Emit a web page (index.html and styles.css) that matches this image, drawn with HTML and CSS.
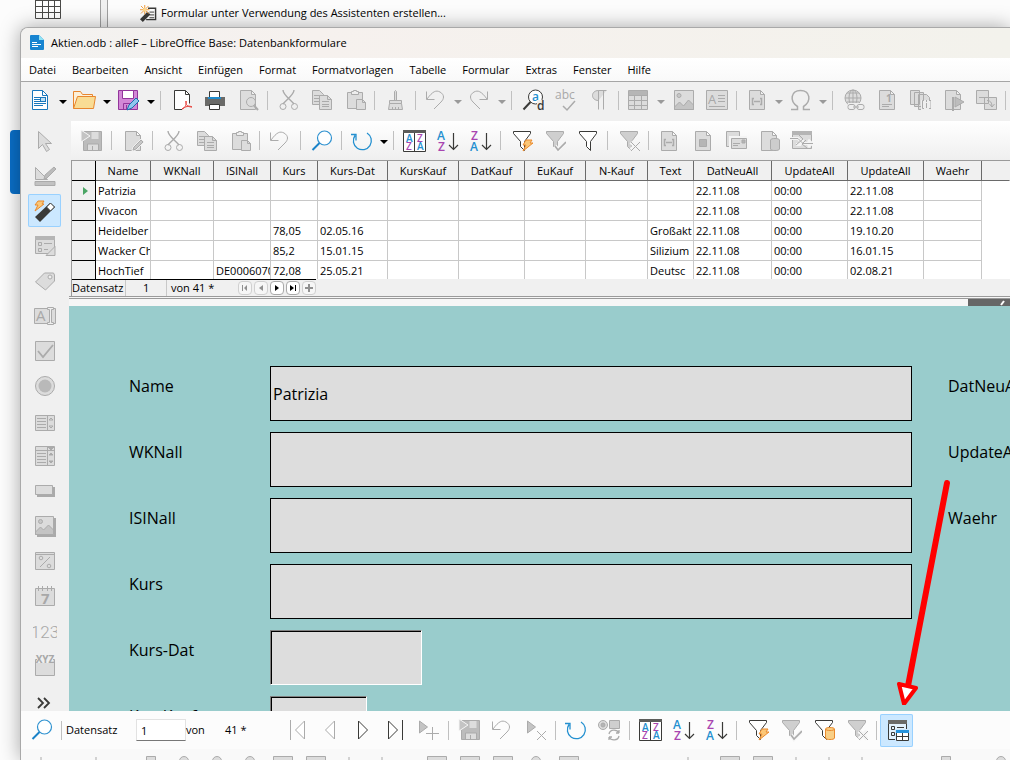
FILE: index.html
```html
<!DOCTYPE html>
<html lang="de">
<head>
    <meta charset="UTF-8">
    <meta name="viewport" content="width=device-width, initial-scale=1.0">
    <title>Aktien.odb : alleF – LibreOffice Base: Datenbankformulare</title>
    <link rel="stylesheet" href="styles.css">
</head>
<body>
    <!-- Icon set, every symbol on a 24px grid -->
    <svg class="sprite" aria-hidden="true">
        <symbol id="i-new" viewBox="0 0 24 24"><path d="M3.500 2.500h10l5 5v14h-15z" fill="#fff" stroke="#1a78bd"/><path d="M13.500 2.500v5h5M5 9.500h6M5 11.500h6M5 13.500h6M5 15.500h12M5 17.500h9" fill="none" stroke="#1a78bd"/><rect x="11.500" y="9.500" width="5" height="4" fill="#bfe0f5" stroke="#1a78bd"/></symbol>
        <symbol id="i-open" viewBox="0 0 24 24"><path d="M.5 20.500v-17h7l2 3h10v4" fill="#fdf0d8" stroke="#e8862e"/><path d="M.5 20.500l4-12h18l-2 12z" fill="#f9dc94" stroke="#e8862e"/></symbol>
        <symbol id="i-save" viewBox="0 0 24 24"><path d="M1.500 2.500h19v19h-19z" fill="#d287d6" stroke="#92359b"/><path d="M5.500 2.500h11v8h-11z" fill="#fff" stroke="#92359b"/><path d="M6.500 21.500v-6h7v6M9.500 17v4" fill="none" stroke="#92359b"/><path d="M10 22l2-5 7-7 3 3-7 7z" fill="#8fc7ee" stroke="#1a6fae"/></symbol>
        <symbol id="i-pdf" viewBox="0 0 24 24"><path d="M13 21.500H5.500v-19h11l4 4v9" fill="#fff" stroke="#3a3a38"/><path d="M16.500 2.500v4h4" fill="none" stroke="#3a3a38"/><path d="M13 21c3-1 5-5 4-8-1 4 2 6 6 6-3-2-7 0-10 2z" fill="none" stroke="#e8403a"/></symbol>
        <symbol id="i-print" viewBox="0 0 24 24"><path d="M7.500 9V3.500h10V9" fill="#fff" stroke="#3a3a38"/><path d="M3 9h20v9H3z" fill="#6a6a68" stroke="none"/><path d="M6 9h13v2H6z" fill="#1e8bcd" stroke="none"/><path d="M7.500 16.500h10v5h-10z" fill="#fff" stroke="#3a3a38"/></symbol>
        <symbol id="i-preview" viewBox="0 0 24 24"><path d="M5.500 2.500h11l4 4v15h-15zM16.500 2.500v4h4"/><circle cx="16" cy="14" r="4.500"/><path d="M19 17.500l4 4.500" stroke-width="2"/></symbol>
        <symbol id="i-cut" viewBox="0 0 24 24"><path d="M7 2c0 5 8 10 11 14M18 2c0 5-8 10-11 14" fill="none" stroke-width="1.400"/><circle cx="7" cy="18.500" r="3" fill="none"/><circle cx="18.500" cy="18.500" r="3" fill="none"/></symbol>
        <symbol id="i-copy" viewBox="0 0 24 24"><path d="M3.500 2.500h7l4 4v10h-11z"/><path d="M5 7.500h6M5 10.500h5M5 13.500h5"/><path d="M10.500 7.500h8l4 4v10h-12z"/><path d="M18.500 7.500v4h4M13 13.500h7M13 16.500h7M13 18.500h7" fill="none"/></symbol>
        <symbol id="i-paste" viewBox="0 0 24 24"><path d="M5.500 4.500h15v16h-15z"/><path d="M9.500 6.500v-3h2v-1h3v1h2v3z" fill="#eee"/><path d="M14.500 11.500h6l3 3v7h-9z"/><path d="M20.500 11.500v3h3" fill="none"/></symbol>
        <symbol id="i-brush" viewBox="0 0 24 24"><path d="M11.500 12.500v-9q1-2 2 0v9M6.500 12.500h12v3h-12zM6.500 15.500l-1 6h14l-1-6"/><path d="M9.500 19v2M12.500 19v2M15.500 19v2"/></symbol>
        <symbol id="i-undo" viewBox="0 0 24 24"><path d="M2.500 3.500v8h8M3 11c6-8 9-9 13-7 5 3 4 7 1 10l-7 7" fill="none"/></symbol>
        <symbol id="i-redo" viewBox="0 0 24 24"><path d="M19.500 3.500v8h-8M19 11C13 3 10 2 6 4c-5 3-4 7-1 10l7 7" fill="none"/></symbol>
        <symbol id="i-find" viewBox="0 0 24 24"><circle cx="15.500" cy="9" r="7" fill="#fff" stroke="#3a3a38"/><path d="M10.500 14l-7 7.500" stroke="#3a3a38" stroke-width="2"/><text x="12" y="13" class="g12 g-blue">a</text><path d="M17 12h8v11h-8z" fill="#efefef" stroke="none"/><text x="17" y="22" class="g12 g-dark">d</text></symbol>
        <symbol id="i-spell" viewBox="0 0 24 24"><text x="2" y="11" class="g12 g-gray">abc</text><path d="M10 18l4 4 8-9" fill="none" stroke-width="1.500"/></symbol>
        <symbol id="i-para" viewBox="0 0 24 24"><path d="M12.500 12.500c-8 0-8-10 0-10h8M12.500 2.500v19M17.500 2.500v19"/></symbol>
        <symbol id="i-table" viewBox="0 0 24 24"><path d="M1.500 2.500h19v19h-19z"/><path d="M2 3h18v4H2z" fill="#b5b5b5" stroke="none"/><path d="M1.500 7.500h19M1.500 12.500h19M1.500 17.500h19M7.500 7v14M14.500 7v14" fill="none"/></symbol>
        <symbol id="i-image" viewBox="0 0 24 24"><path d="M3.500 2.500h19v19h-19z"/><circle cx="8" cy="7.500" r="2" fill="#c8c8c8"/><path d="M3.500 19l5-5 4 4 5-6 5 5v4.500h-19z" fill="#c4c4c4"/></symbol>
        <symbol id="i-textbox" viewBox="0 0 24 24"><path d="M2.500 2.500h21v19h-21z"/><text x="4" y="16" class="g13 g-gray">A</text><path d="M14 7.500h7M14 10.500h7M14 13.500h7M5 18.500h16"/></symbol>
        <symbol id="i-field" viewBox="0 0 24 24"><path d="M4.500 2.500h11l4 4v15h-15zM15.500 2.500v4h4"/><path d="M9 10.500H7.500v6H9M15 10.500h1.500v6H15M9 13.500h6" fill="none" stroke-width="1.500"/></symbol>
        <symbol id="i-omega" viewBox="0 0 24 24"><path d="M2 21.500h6.500v-3C0 13 2 2.500 11.500 2.500S23 13 14.500 18.500v3H21" fill="none" stroke-width="1.500"/></symbol>
        <symbol id="i-link" viewBox="0 0 24 24"><circle cx="12" cy="10" r="8"/><path d="M4 10h16M12 2v16M6 5h12M6 14h12" fill="none"/><ellipse cx="12" cy="10" rx="4" ry="8" fill="none"/><path d="M7 15h18v8H7z" fill="#efefef" stroke="none"/><rect x="7" y="16.500" width="7" height="5" rx="2" fill="none"/><rect x="16" y="16.500" width="7" height="5" rx="2" fill="none"/><path d="M12 19h6"/></symbol>
        <symbol id="i-footnote" viewBox="0 0 24 24"><path d="M5.500 2.500h11l4 4v15h-15zM16.500 2.500v4h4M8 16.500h10M8 18.500h7"/><text x="12" y="14" class="g10 g-gray g-bold">1</text></symbol>
        <symbol id="i-index" viewBox="0 0 24 24"><path d="M3.500 2.500h9v14h-9zM7.500 4.500h9v14h-9zM11.500 6.500h8l3 3v12h-11z"/><path d="M14 12h11v10H14z" fill="#efefef" stroke="none"/><path d="M17 12.500h-1.500v8H17M22 12.500h2v8h-2M19.500 15v5M19.500 12v2" fill="none"/></symbol>
        <symbol id="i-bookmark" viewBox="0 0 24 24"><path d="M5.500 2.500h11l4 4v15h-15zM16.500 2.500v4h4"/><path d="M13 9v14" stroke-width="2"/><path d="M15 9l9 5-9 5z" fill="#bdbdbd"/></symbol>
        <symbol id="i-crossref" viewBox="0 0 24 24"><path d="M3.500 2.500h12v13h-12zM11.500 9.500h12v12h-12z"/><path d="M6 9.500h8M14 12.500q5 0 5 6M16.500 16l2.500 3 2.500-3" fill="none"/></symbol>
        <symbol id="i-saverec" viewBox="0 0 24 24"><path d="M4.500 2.500h18v19h-18z" fill="#bcbcbc"/><path d="M12.500 3h7v7h-7z" fill="#ddd" stroke="none"/><path d="M2 1l9 6-9 6z" fill="#c4c4c4" stroke="#f6f6f6"/><path d="M8.500 21v-6h11v6M13.500 17v4" fill="#ddd"/></symbol>
        <symbol id="i-edit" viewBox="0 0 24 24"><path d="M5.500 2.500h11l4 4v15h-15zM16.500 2.500v4h4"/><path d="M12 22l1-4 8-8 3 3-8 8z" stroke="#f0f0f0"/><path d="M13 21l1-3 7-7 2 2-7 7z" fill="#c8c8c8"/></symbol>
        <symbol id="i-search" viewBox="0 0 24 24"><circle cx="15.500" cy="9" r="7" fill="#fff" stroke="#2f92d0" stroke-width="1.200"/><path d="M10.500 14l-7 7" stroke="#1a83c8" stroke-width="2"/></symbol>
        <symbol id="i-refresh" viewBox="0 0 24 24"><path d="M17 4a9 9 0 1 1-12 2.500M1 5.500h5v6" fill="none" stroke="#2490d0" stroke-width="1.300"/></symbol>
        <symbol id="i-autosort" viewBox="0 0 24 24"><path d="M1.500 1.500h22v21h-22z" fill="#fff" stroke="#3a3a38"/><path d="M1 1h23v3H1z" fill="#5c5c5a" stroke="none"/><path d="M12.500 4v18" stroke="#3a3a38"/><text x="4" y="13" class="g10 g-blue">A</text><text x="4" y="21" class="g10 g-purple">Z</text><text x="15" y="13" class="g10 g-purple">Z</text><text x="15" y="21" class="g10 g-blue">A</text></symbol>
        <symbol id="i-az" viewBox="0 0 24 24"><text x="2" y="11" class="g12 g-blue">A</text><text x="3" y="22" class="g12 g-purple">Z</text><path d="M18.500 4v16M14 16l4.500 4.500L23 16" fill="none" stroke="#3a3a38" stroke-width="1.200"/></symbol>
        <symbol id="i-za" viewBox="0 0 24 24"><text x="3" y="11" class="g12 g-purple">Z</text><text x="2" y="22" class="g12 g-blue">A</text><path d="M18.500 4v16M14 16l4.500 4.500L23 16" fill="none" stroke="#3a3a38" stroke-width="1.200"/></symbol>
        <symbol id="i-funnel" viewBox="0 0 24 24"><path d="M4.500 2.500h17v2l-6 8v9l-4-4v-5l-7-8z"/></symbol>
        <symbol id="i-funnelauto" viewBox="0 0 24 24"><path d="M4.500 2.500h17v2l-6 8v9l-4-4v-5l-7-8z"/><path d="M17 11h6l-2 3h3l-10 8 3-6h-3z" fill="#fbc778" stroke="#ea8a2c"/></symbol>
        <symbol id="i-funnelok" viewBox="0 0 24 24"><path d="M4.500 2.500h17v2l-6 8v9l-4-4v-5l-7-8z" fill="#cfcfcf"/><path d="M13 17l3 4 8-8" fill="none" stroke="#f5f5f5" stroke-width="4"/><path d="M13 17l3 4 8-8" fill="none" stroke-width="1.600"/></symbol>
        <symbol id="i-funneldb" viewBox="0 0 24 24"><path d="M4.500 2.500h17v2l-6 8v9l-4-4v-5l-7-8z"/><path d="M14.500 11c0-2 9-2 9 0v9c0 2-9 2-9 0z" fill="#f9cf86" stroke="#ea8a2c"/><path d="M14.500 11c0 2 9 2 9 0" fill="none" stroke="#ea8a2c"/></symbol>
        <symbol id="i-funnelx" viewBox="0 0 24 24"><path d="M4.500 2.500h17v2l-6 8v9l-4-4v-5l-7-8z" fill="#cfcfcf"/><path d="M15 13l8 8M23 13l-8 8" stroke="#f5f5f5" stroke-width="4"/><path d="M15 13l9 9M24 13l-9 9"/></symbol>
        <symbol id="i-docform" viewBox="0 0 24 24"><path d="M5.500 2.500h11l4 4v15h-15zM16.500 2.500v4h4"/><path d="M9.500 10.500h7v7h-7z" fill="#b5b5b5"/></symbol>
        <symbol id="i-mail" viewBox="0 0 24 24"><path d="M3.500 2.500h13v15h-13z"/><path d="M7.500 8.500h16v12h-16z" stroke="#f4f4f4" stroke-width="3"/><path d="M8.500 9.500h15v10h-15zM10 14.500h7M10 16.500h5"/><path d="M19 11h3v3h-3z" fill="#b5b5b5"/></symbol>
        <symbol id="i-docdb" viewBox="0 0 24 24"><path d="M5.500 2.500h11l4 4v15h-15zM16.500 2.500v4h4"/><path d="M14.500 11c0-2 9-2 9 0v9c0 2-9 2-9 0z" fill="#cdcdcd"/></symbol>
        <symbol id="i-window" viewBox="0 0 24 24"><path d="M3.500 2.500h19v17h-19z"/><path d="M3 2h20v4H3z" fill="#b5b5b5" stroke="none"/><path d="M1 9.500h8l5 5h10M19 11l4 3.500-4 3.500M7 15.500h4l3-5" fill="none" stroke="#f4f4f4" stroke-width="3"/><path d="M1 9.500h8l5 5h10M10 6l4 4-7 6M17 11l-4 4 5 4" fill="none"/></symbol>
        <symbol id="i-cursor" viewBox="0 0 24 24"><path d="M5.500 2.500v17l4-4 4 7 3-2-4-6h6z"/></symbol>
        <symbol id="i-design" viewBox="0 0 24 24"><path d="M2.500 3.500v12h12z"/><path d="M2 17.500h20v4H2z" fill="#c2c2c2"/><path d="M11 15l1-4 9-8 2 2-9 9z" fill="#bbb"/></symbol>
        <symbol id="i-wizard" viewBox="0 0 24 24"><path d="M2 18L17 4l5 4L7 23z" fill="#3a3a38" stroke="none"/><path d="M13.500 8L17.500 4l4 4-4 4z" fill="#fff" stroke="#3a3a38"/><path d="M5 2h6L9 5h2l-9 7 3-6H2z" fill="#fbc778" stroke="#ea8a2c"/></symbol>
        <symbol id="i-formprop" viewBox="0 0 24 24"><path d="M2.500 2.500h19v17h-19z"/><path d="M2 2h20v4H2z" fill="#b5b5b5" stroke="none"/><path d="M5.500 8.500h3v3h-3zM5.500 14.500h3v3h-3zM11 9.500h8M11 15.500h4" fill="none"/><path d="M13 21.500l9-9v9z"/></symbol>
        <symbol id="i-tag" viewBox="0 0 24 24"><path d="M2.500 13l9-9h9l1 2v6l-9 9z"/><circle cx="17" cy="8" r="2" fill="#eee"/></symbol>
        <symbol id="i-inputbox" viewBox="0 0 24 24"><path d="M1.500 4.500h21v15h-21z"/><text x="3" y="17" class="g15 g-gray">A</text><path d="M14.500 3.500h6v2h-2v13h2v2h-6v-2h2v-13h-2z" fill="#eee"/></symbol>
        <symbol id="i-check" viewBox="0 0 24 24"><path d="M2.500 2.500h19v19h-19z"/><path d="M5 12l5 6L20 6" fill="none" stroke-width="1.800"/></symbol>
        <symbol id="i-radio" viewBox="0 0 24 24"><circle cx="12" cy="12" r="9.500"/><circle cx="12" cy="12" r="6.500" fill="#b9b9b9" stroke="none"/></symbol>
        <symbol id="i-listbox" viewBox="0 0 24 24"><path d="M2.500 6.500h19v15h-19zM14.500 6.500v15M4 9.500h9M4 12.500h9M4 15.500h9M4 18.500h9"/><path d="M16 11l2-2 2 2zM16 17l2 2 2-2z"/></symbol>
        <symbol id="i-combo" viewBox="0 0 24 24"><path d="M2.500 2.500h19v19h-19zM2.500 6.500h19M14.500 2.500v19M4 9.500h9M4 12.500h9M4 15.500h9M4 18.500h9"/><path d="M15 3h6l-3 3zM16 11l2-2 2 2zM16 17l2 2 2-2z" fill="#aaa"/></symbol>
        <symbol id="i-button" viewBox="0 0 24 24"><path d="M4 8h18v10H4z" fill="#aaa" stroke="none"/><path d="M2.500 6.500h17v9h-17z"/></symbol>
        <symbol id="i-imgbtn" viewBox="0 0 24 24"><path d="M4 4h19v19H4z" fill="#aaa" stroke="none"/><path d="M2.500 2.500h18v18h-18z"/><circle cx="7.500" cy="7.500" r="2" fill="#c8c8c8"/><path d="M2.500 18l5-5 3 3 5-5 5 5v4.500h-18z" fill="#c4c4c4"/></symbol>
        <symbol id="i-percent" viewBox="0 0 24 24"><path d="M2.500 3.500h19v17h-19zM2.500 5.500h19"/><path d="M7 18L17 8" fill="none"/><circle cx="8" cy="9" r="1.800" fill="none"/><circle cx="16" cy="17" r="1.800" fill="none"/></symbol>
        <symbol id="i-date" viewBox="0 0 24 24"><path d="M2.500 4.500h19v17h-19zM5.500 2v5M9.500 2v5M14.500 2v5M18.500 2v5"/><text x="8" y="20" class="g15 g-gray g-bold">7</text></symbol>
        <symbol id="i-num" viewBox="0 0 24 24"><text x="12" y="19" text-anchor="middle" class="g17 g-gray">123</text></symbol>
        <symbol id="i-pattern" viewBox="0 0 24 24"><path d="M2.500 5.500h19v16h-19z"/><path d="M4 1h16v8H4z" fill="#efefef" stroke="none"/><text x="12" y="9" text-anchor="middle" class="g10 g-gray g-bold">XYZ</text></symbol>
        <symbol id="i-more" viewBox="0 0 24 24"><path d="M5 9l5 5-5 5M11 9l5 5-5 5" fill="none" stroke="#3a3a38" stroke-width="1.800"/></symbol>
        <symbol id="i-first" viewBox="0 0 24 24"><path d="M6.500 2v20M20.500 3v18l-9-9z"/></symbol>
        <symbol id="i-prev" viewBox="0 0 24 24"><path d="M17.500 3v18l-9-9z"/></symbol>
        <symbol id="i-next" viewBox="0 0 24 24"><path d="M8.500 3v18l9-9z"/></symbol>
        <symbol id="i-last" viewBox="0 0 24 24"><path d="M5.500 3v18l9-9zM19.500 2v20"/></symbol>
        <symbol id="i-newrec" viewBox="0 0 24 24"><path d="M3.500 3v12l8-6z" fill="#c4c4c4"/><path d="M16.500 9v13M10 15.500h13"/></symbol>
        <symbol id="i-delrec" viewBox="0 0 24 24"><path d="M4.500 3v12l8-6z" fill="#c4c4c4"/><path d="M14 13l9 9M23 13l-9 9"/></symbol>
        <symbol id="i-reloadctl" viewBox="0 0 24 24"><circle cx="6" cy="7" r="4.500"/><circle cx="6" cy="7" r="2" fill="#b5b5b5"/><path d="M12.500 2.500h10v8h-10z" fill="#cfcfcf"/><path d="M12 16c1-5 8-5 10-1v-3m0 3h-3M22 18c-1 5-8 5-10 1v3m0-3h3" fill="none" stroke-width="1.300"/></symbol>
        <symbol id="i-datasource" viewBox="0 0 24 24"><path d="M3.500 2.500h18v19h-18z" fill="#e2f1fd" stroke="#3a3a38"/><path d="M3 2h19v4H3z" fill="#6a6a68" stroke="none"/><path d="M6.500 8.500h3v3h-3zM6.500 14.500h3v3h-3zM12 9.500h7" fill="none" stroke="#3a3a38"/><path d="M10 11h14v13H10z" fill="#cce8ff" stroke="none"/><path d="M11.500 12.500h12v10h-12zM11.500 18.500h12M17.500 15v7" fill="#fff" stroke="#3a3a38"/><path d="M11 12h13v3H11z" fill="#2693dc" stroke="none"/></symbol>
        <symbol id="i-line" viewBox="0 0 24 24"><path d="M12 3v16"/></symbol>
        <symbol id="i-box" viewBox="0 0 24 24"><path d="M2.500 2.500h19v12h-19z"/></symbol>
        <symbol id="i-smallbox" viewBox="0 0 24 24"><path d="M7.500 2.500h9v12h-9z"/></symbol>
        <symbol id="i-ellipse" viewBox="0 0 24 24"><circle cx="12" cy="7" r="4.500"/></symbol>
    </svg>

    <div class="desktop">
        <!-- Base main window, peeking out behind -->
        <div class="backdrop">
            <svg class="grid-icon" viewBox="0 0 28 20" aria-hidden="true"><path d="M.5 0v18.500h25V0M7.500 0v18M13.500 0v18M19.500 0v18M0 6.500h26M0 12.500h26M0 .5h26" fill="#fff" stroke="#4a4a48"/></svg>
            <div class="task">
                <svg class="task-icon" viewBox="0 0 18 18" aria-hidden="true"><path d="M8.500 3.500h8v12h-10" fill="#fff" stroke="#3a3a38" stroke-width="1.500"/><path d="M10 7.500h5M10 10.500h5M10 13.500h5" stroke="#3a3a38"/><path d="M0 15l8-8 3 3-8 8z" fill="#3a3a38"/><path d="M5 0v10M0 5h10M1 1l8 8M9 1L1 9" stroke="#f09a3a"/><circle cx="5" cy="5" r="2" fill="#ffd98c"/></svg>
                <a href="#assistent">Formular unter Verwendung des Assistenten erstellen...</a>
            </div>
        </div>
        <div class="blue-tab"></div>

        <div class="window">
            <header class="titlebar">
                <svg class="app-icon" viewBox="0 0 16 18" aria-hidden="true"><path d="M1 2q0-1 1-1h8l5 5v9q0 1-1 1H2q-1 0-1-1z" fill="#1784d0"/><path d="M10 1l5 5h-5z" fill="#8fe3f5"/><path d="M3 8.500h5M3 10.500h9M3 12.500h6" stroke="#fff"/></svg>
                <span>Aktien.odb : alleF – LibreOffice Base: Datenbankformulare</span>
            </header>

            <nav class="menubar">
                <a href="#datei">Datei</a>
                <a href="#bearbeiten">Bearbeiten</a>
                <a href="#ansicht">Ansicht</a>
                <a href="#einfuegen">Einfügen</a>
                <a href="#format">Format</a>
                <a href="#formatvorlagen">Formatvorlagen</a>
                <a href="#tabelle">Tabelle</a>
                <a href="#formular">Formular</a>
                <a href="#extras">Extras</a>
                <a href="#fenster">Fenster</a>
                <a href="#hilfe">Hilfe</a>
            </nav>

            <!-- Standard toolbar -->
            <div class="toolbar standard">
                <button aria-label="Neu"><svg><use href="#i-new"/></svg></button><button class="drop dark" aria-label="Neu Auswahl"></button>
                <button aria-label="Öffnen"><svg><use href="#i-open"/></svg></button><button class="drop dark" aria-label="Öffnen Auswahl"></button>
                <button aria-label="Speichern"><svg><use href="#i-save"/></svg></button><button class="drop dark" aria-label="Speichern Auswahl"></button>
                <span class="sep"></span>
                <button aria-label="Als PDF exportieren"><svg><use href="#i-pdf"/></svg></button>
                <button aria-label="Drucken"><svg><use href="#i-print"/></svg></button>
                <button aria-label="Druckvorschau"><svg><use href="#i-preview"/></svg></button>
                <span class="sep"></span>
                <button aria-label="Ausschneiden"><svg><use href="#i-cut"/></svg></button>
                <button aria-label="Kopieren"><svg><use href="#i-copy"/></svg></button>
                <button aria-label="Einfügen"><svg><use href="#i-paste"/></svg></button>
                <span class="sep"></span>
                <button aria-label="Format übertragen"><svg><use href="#i-brush"/></svg></button>
                <span class="sep"></span>
                <button aria-label="Rückgängig"><svg><use href="#i-undo"/></svg></button><button class="drop" aria-label="Rückgängig Auswahl"></button>
                <button aria-label="Wiederherstellen"><svg><use href="#i-redo"/></svg></button><button class="drop" aria-label="Wiederherstellen Auswahl"></button>
                <span class="sep"></span>
                <button aria-label="Suchen und Ersetzen"><svg><use href="#i-find"/></svg></button>
                <button aria-label="Rechtschreibung"><svg><use href="#i-spell"/></svg></button>
                <button aria-label="Formatierungszeichen"><svg><use href="#i-para"/></svg></button>
                <span class="sep"></span>
                <button aria-label="Tabelle"><svg><use href="#i-table"/></svg></button><button class="drop" aria-label="Tabelle Auswahl"></button>
                <button aria-label="Bild"><svg><use href="#i-image"/></svg></button>
                <button aria-label="Textfeld"><svg><use href="#i-textbox"/></svg></button>
                <span class="sep"></span>
                <button aria-label="Feldbefehl"><svg><use href="#i-field"/></svg></button><button class="drop" aria-label="Feldbefehl Auswahl"></button>
                <button aria-label="Sonderzeichen"><svg><use href="#i-omega"/></svg></button><button class="drop" aria-label="Sonderzeichen Auswahl"></button>
                <span class="sep"></span>
                <button aria-label="Hyperlink"><svg><use href="#i-link"/></svg></button>
                <button aria-label="Fußnote"><svg><use href="#i-footnote"/></svg></button>
                <button aria-label="Verzeichnis"><svg><use href="#i-index"/></svg></button>
                <button aria-label="Lesezeichen"><svg><use href="#i-bookmark"/></svg></button>
                <button aria-label="Querverweis"><svg><use href="#i-crossref"/></svg></button>
                <span class="sep"></span>
            </div>

            <div class="workspace">
                <!-- Form controls -->
                <aside class="sidebar">
                    <button aria-label="Auswahl"><svg><use href="#i-cursor"/></svg></button>
                    <button aria-label="Entwurfsmodus"><svg><use href="#i-design"/></svg></button>
                    <button class="active" aria-label="Assistenten"><svg><use href="#i-wizard"/></svg></button>
                    <button aria-label="Formulareigenschaften"><svg><use href="#i-formprop"/></svg></button>
                    <button aria-label="Beschriftung"><svg><use href="#i-tag"/></svg></button>
                    <button aria-label="Textfeld"><svg><use href="#i-inputbox"/></svg></button>
                    <button aria-label="Markierfeld"><svg><use href="#i-check"/></svg></button>
                    <button aria-label="Optionsfeld"><svg><use href="#i-radio"/></svg></button>
                    <button aria-label="Listenfeld"><svg><use href="#i-listbox"/></svg></button>
                    <button aria-label="Kombinationsfeld"><svg><use href="#i-combo"/></svg></button>
                    <button aria-label="Schaltfläche"><svg><use href="#i-button"/></svg></button>
                    <button aria-label="Grafische Schaltfläche"><svg><use href="#i-imgbtn"/></svg></button>
                    <button aria-label="Formatiertes Feld"><svg><use href="#i-percent"/></svg></button>
                    <button aria-label="Datumsfeld"><svg><use href="#i-date"/></svg></button>
                    <button aria-label="Numerisches Feld"><svg><use href="#i-num"/></svg></button>
                    <button aria-label="Maskiertes Feld"><svg><use href="#i-pattern"/></svg></button>
                    <button aria-label="Mehr"><svg><use href="#i-more"/></svg></button>
                </aside>

                <div class="content">
                    <!-- Data source view -->
                    <section class="datasource">
                        <div class="toolbar table-tools">
                            <button aria-label="Datensatz speichern"><svg><use href="#i-saverec"/></svg></button>
                            <span class="sep"></span>
                            <button aria-label="Daten bearbeiten"><svg><use href="#i-edit"/></svg></button>
                            <span class="sep"></span>
                            <button aria-label="Ausschneiden"><svg><use href="#i-cut"/></svg></button>
                            <button aria-label="Kopieren"><svg><use href="#i-copy"/></svg></button>
                            <button aria-label="Einfügen"><svg><use href="#i-paste"/></svg></button>
                            <span class="sep"></span>
                            <button aria-label="Rückgängig"><svg><use href="#i-undo"/></svg></button>
                            <span class="sep"></span>
                            <button aria-label="Datensatz suchen"><svg><use href="#i-search"/></svg></button>
                            <span class="sep"></span>
                            <button aria-label="Aktualisieren"><svg><use href="#i-refresh"/></svg></button><button class="drop dark" aria-label="Aktualisieren Auswahl"></button>
                            <span class="sep"></span>
                            <button aria-label="Sortieren"><svg><use href="#i-autosort"/></svg></button>
                            <button aria-label="Aufsteigend"><svg><use href="#i-az"/></svg></button>
                            <button aria-label="Absteigend"><svg><use href="#i-za"/></svg></button>
                            <span class="sep"></span>
                            <button class="on" aria-label="AutoFilter"><svg><use href="#i-funnelauto"/></svg></button>
                            <button aria-label="Filter anwenden"><svg><use href="#i-funnelok"/></svg></button>
                            <button class="on" aria-label="Standardfilter"><svg><use href="#i-funnel"/></svg></button>
                            <span class="sep"></span>
                            <button aria-label="Filter zurücksetzen"><svg><use href="#i-funnelx"/></svg></button>
                            <span class="sep"></span>
                            <button aria-label="Daten in Text"><svg><use href="#i-field"/></svg></button>
                            <button aria-label="Daten in Felder"><svg><use href="#i-docform"/></svg></button>
                            <button aria-label="Seriendruck"><svg><use href="#i-mail"/></svg></button>
                            <button aria-label="Datenquelle des Dokuments"><svg><use href="#i-docdb"/></svg></button>
                            <button aria-label="Explorer"><svg><use href="#i-window"/></svg></button>
                        </div>

                        <div class="table-view">
                            <table>
                                <colgroup>
                                    <col class="c-mark"><col class="c-name"><col class="c-wkn"><col class="c-isin"><col class="c-kurs"><col class="c-kdat"><col class="c-kkauf"><col class="c-dkauf"><col class="c-eu"><col class="c-nk"><col class="c-text"><col class="c-neu"><col class="c-upd"><col class="c-upd"><col class="c-waehr"><col>
                                </colgroup>
                                <thead>
                                    <tr><th></th><th>Name</th><th>WKNall</th><th>ISINall</th><th>Kurs</th><th>Kurs-Dat</th><th>KursKauf</th><th>DatKauf</th><th>EuKauf</th><th>N-Kauf</th><th>Text</th><th>DatNeuAll</th><th>UpdateAll</th><th>UpdateAll</th><th>Waehr</th><th></th></tr>
                                </thead>
                                <tbody>
                                    <tr><th class="current"></th><td>Patrizia</td><td></td><td></td><td></td><td></td><td></td><td></td><td></td><td></td><td></td><td>22.11.08</td><td>00:00</td><td>22.11.08</td><td></td><td></td></tr>
                                    <tr><th></th><td>Vivacon</td><td></td><td></td><td></td><td></td><td></td><td></td><td></td><td></td><td></td><td>22.11.08</td><td>00:00</td><td>22.11.08</td><td></td><td></td></tr>
                                    <tr><th></th><td>Heidelber</td><td></td><td></td><td>78,05</td><td>02.05.16</td><td></td><td></td><td></td><td></td><td>Großakt</td><td>22.11.08</td><td>00:00</td><td>19.10.20</td><td></td><td></td></tr>
                                    <tr><th></th><td>Wacker Ch</td><td></td><td></td><td>85,2</td><td>15.01.15</td><td></td><td></td><td></td><td></td><td>Silizium</td><td>22.11.08</td><td>00:00</td><td>16.01.15</td><td></td><td></td></tr>
                                    <tr><th></th><td>HochTief</td><td></td><td>DE0006070</td><td>72,08</td><td>25.05.21</td><td></td><td></td><td></td><td></td><td>Deutsc</td><td>22.11.08</td><td>00:00</td><td>02.08.21</td><td></td><td></td></tr>
                                </tbody>
                            </table>
                        </div>

                        <div class="record-nav">
                            <label for="table-record">Datensatz</label>
                            <input id="table-record" type="text" value="1">
                            <span class="count">von 41 *</span>
                            <button disabled aria-label="Erster"><svg viewBox="0 0 12 12"><path d="M3 3h1v6H3zM8 3v6L5 6z"/></svg></button>
                            <button disabled aria-label="Vorheriger"><svg viewBox="0 0 12 12"><path d="M8 3v6L4 6z"/></svg></button>
                            <button aria-label="Nächster"><svg viewBox="0 0 12 12"><path d="M4 3v6l4-3z"/></svg></button>
                            <button aria-label="Letzter"><svg viewBox="0 0 12 12"><path d="M3 3v6l4-3zM8 3h1v6H8z"/></svg></button>
                            <button disabled aria-label="Neu"><svg viewBox="0 0 12 12"><path d="M5 2h2v3h3v2H7v3H5V7H2V5h3z"/></svg></button>
                        </div>
                    </section>
                    <div class="splitter"><span class="grip"><svg viewBox="0 0 42 7"><path d="M33 6l3-4" stroke="#fff" stroke-width="2"/></svg></span></div>

                    <!-- Form document -->
                    <form class="document">
                        <label for="f-name">Name</label><input id="f-name" type="text" value="Patrizia"><span>DatNeuAll</span>
                        <label for="f-wkn">WKNall</label><input id="f-wkn" type="text"><span>UpdateAll</span>
                        <label for="f-isin">ISINall</label><input id="f-isin" type="text"><span>Waehr</span>
                        <label for="f-kurs">Kurs</label><input id="f-kurs" type="text"><span></span>
                        <label for="f-kdat">Kurs-Dat</label><input id="f-kdat" class="inset medium" type="text"><span></span>
                        <label for="f-kkauf">KursKauf</label><input id="f-kkauf" class="inset small" type="text"><span></span>
                    </form>
                </div>
            </div>

            <!-- Form navigation -->
            <div class="toolbar form-nav">
                <button aria-label="Datensatz suchen"><svg><use href="#i-search"/></svg></button>
                <span class="sep"></span>
                <div class="record">
                    <label for="form-record">Datensatz</label>
                    <input id="form-record" type="text" value="1">
                    <span class="of">von</span>
                    <span>41 *</span>
                </div>
                <button aria-label="Erster Datensatz"><svg class="hollow"><use href="#i-first"/></svg></button>
                <button aria-label="Vorheriger Datensatz"><svg class="hollow"><use href="#i-prev"/></svg></button>
                <button class="on" aria-label="Nächster Datensatz"><svg><use href="#i-next"/></svg></button>
                <button class="on" aria-label="Letzter Datensatz"><svg><use href="#i-last"/></svg></button>
                <button aria-label="Neuer Datensatz"><svg><use href="#i-newrec"/></svg></button>
                <span class="sep"></span>
                <button aria-label="Datensatz speichern"><svg><use href="#i-saverec"/></svg></button>
                <button aria-label="Rückgängig"><svg><use href="#i-undo"/></svg></button>
                <button aria-label="Datensatz löschen"><svg><use href="#i-delrec"/></svg></button>
                <span class="sep"></span>
                <button aria-label="Aktualisieren"><svg><use href="#i-refresh"/></svg></button>
                <button aria-label="Kontrollfeld aktualisieren"><svg><use href="#i-reloadctl"/></svg></button>
                <span class="sep"></span>
                <button aria-label="Sortieren"><svg><use href="#i-autosort"/></svg></button>
                <button aria-label="Aufsteigend"><svg><use href="#i-az"/></svg></button>
                <button aria-label="Absteigend"><svg><use href="#i-za"/></svg></button>
                <span class="sep"></span>
                <button class="on" aria-label="AutoFilter"><svg><use href="#i-funnelauto"/></svg></button>
                <button aria-label="Filter anwenden"><svg><use href="#i-funnelok"/></svg></button>
                <button class="on" aria-label="Formularbasierter Filter"><svg><use href="#i-funneldb"/></svg></button>
                <button aria-label="Filter zurücksetzen"><svg><use href="#i-funnelx"/></svg></button>
                <span class="sep"></span>
                <button class="active" aria-label="Datenquelle als Tabelle"><svg><use href="#i-datasource"/></svg></button>
            </div>

            <!-- Drawing toolbar, cut off by the screen edge -->
            <div class="toolbar drawing">
                <button aria-label="Auswählen"><svg><use href="#i-line"/></svg></button>
                <span class="sep"></span>
                <button aria-label="Linie"><svg><use href="#i-line"/></svg></button>
                <span class="sep"></span>
                <button aria-label="Rechteck"><svg><use href="#i-smallbox"/></svg></button>
                <button aria-label="Ellipse"><svg><use href="#i-ellipse"/></svg></button>
                <button aria-label="Polygon"><svg><use href="#i-ellipse"/></svg></button>
                <button aria-label="Kurve"><svg><use href="#i-ellipse"/></svg></button>
                <button aria-label="Textfeld"><svg><use href="#i-box"/></svg></button>
                <button aria-label="Laufschrift"><svg><use href="#i-box"/></svg></button>
                <button aria-label="Legende"><svg><use href="#i-line"/></svg></button>
                <button aria-label="Pfeil"><svg><use href="#i-line"/></svg></button>
                <span class="sep"></span>
                <button aria-label="Symbole"><svg><use href="#i-box"/></svg></button>
                <button aria-label="Blockpfeile"><svg><use href="#i-box"/></svg></button>
                <button aria-label="Sterne"><svg><use href="#i-box"/></svg></button>
                <button aria-label="Legenden"><svg><use href="#i-ellipse"/></svg></button>
                <button aria-label="Flussdiagramm"><svg><use href="#i-box"/></svg></button>
                <button class="group-wide" aria-label="Punkte"><svg><use href="#i-line"/></svg></button>
                <span class="sep narrow"></span>
                <button aria-label="Rahmen"><svg><use href="#i-box"/></svg></button>
                <button aria-label="Bild"><svg><use href="#i-box"/></svg></button>
                <button aria-label="Drehen"><svg><use href="#i-line"/></svg></button>
                <button aria-label="Ausrichten"><svg><use href="#i-line"/></svg></button>
                <button aria-label="Anordnen"><svg><use href="#i-line"/></svg></button>
                <button class="group" aria-label="Verankerung"><svg><use href="#i-smallbox"/></svg></button>
                <span class="sep"></span>
                <button aria-label="Extrusion"><svg><use href="#i-ellipse"/></svg></button>
            </div>
        </div>

        <svg class="pointer" viewBox="0 0 60 230" aria-hidden="true">
            <path d="M52 8L13 211" fill="none" stroke="#ff0000" stroke-width="6" stroke-linecap="round"/>
            <path d="M4 209l17 4-12 16z" fill="#fff" stroke="#ff0000" stroke-width="4" stroke-linejoin="round"/>
        </svg>
    </div>
</body>
</html>
```

FILE: styles.css
```css
/* Global Styles */
* {
    box-sizing: border-box;
}

body {
    margin: 0;
    font-family: "Open Sans", "Noto Sans", sans-serif;
    font-size: 11px;
    line-height: 16px;
    color: #000;
}

a {
    color: inherit;
    text-decoration: none;
}

button {
    padding: 0;
    border: none;
    background: none;
    font: inherit;
}

.sprite {
    display: none;
}

.desktop {
    position: relative;
    display: flex;
    flex-direction: column;
    height: 100vh;
    overflow: hidden;
    background-color: #fcfcfc;
}

/* Window behind */
.backdrop {
    display: flex;
    flex: none;
    height: 27px;
    padding-left: 35px;
}

.grid-icon {
    flex: none;
    width: 28px;
    height: 20px;
}

.task {
    display: flex;
    gap: 4px;
    flex: 1;
    margin-left: 37px;
    padding: 5px 0 0 32px;
    border-left: 1px solid #a0a0a0;
    box-shadow: inset 6px 0 #f0f0f0, inset 7px 0 #a0a0a0;
    padding-left: 39px;
}

.task-icon {
    width: 17px;
    height: 17px;
}

.blue-tab {
    position: absolute;
    top: 130px;
    left: 10px;
    width: 14px;
    height: 64px;
    border-radius: 4px;
    background-color: #0a6fc8;
}

/* Main window */
.window {
    position: relative;
    display: flex;
    flex-direction: column;
    flex: 1;
    min-height: 0;
    margin-left: 20px;
    overflow: hidden;
    border: 1px solid #a9a9a9;
    border-width: 1px 0 0 1px;
    border-radius: 8px 0 0 0;
    background-color: #f0f0f0;
    box-shadow: 0 0 20px rgba(0, 0, 0, 0.35);
}

.titlebar {
    display: flex;
    align-items: center;
    gap: 6px;
    flex: none;
    height: 30px;
    padding-left: 8px;
    background: linear-gradient(90deg, #f3f2f0, #f6f1ee 30%, #f3f2ec);
}

.app-icon {
    width: 16px;
    height: 18px;
}

.menubar {
    display: flex;
    align-items: center;
    gap: 16px;
    flex: none;
    height: 24px;
    padding-left: 8px;
    border-bottom: 1px solid #a5a5a5;
    background: linear-gradient(#fff, #f9f9f9);
}

/* Toolbars */
.toolbar {
    display: flex;
    align-items: center;
    flex: none;
    overflow: hidden;
    padding-left: 3px;
}

.toolbar button,
.sidebar button {
    flex: none;
    width: 33px;
    height: 33px;
    padding: 0 4px 0 5px;
}

.toolbar svg,
.sidebar svg {
    display: block;
    width: 24px;
    height: 24px;
    overflow: visible;
    fill: #dcdcdc;
    stroke: #ababab;
}

.toolbar .on svg {
    fill: #fff;
    stroke: #3a3a38;
}

.toolbar svg.hollow {
    fill: #fff;
}

.toolbar button.active,
.sidebar button.active {
    border-radius: 2px;
    background-color: #cce8ff;
    box-shadow: inset 0 0 0 1px #99d1ff;
}

.toolbar button.drop {
    width: 11px;
    padding: 3px 1px 0 2px;
}

.drop::before {
    content: "";
    display: block;
    border: 4px solid transparent;
    border-top-color: #9a9a9a;
    border-bottom: none;
}

.drop.dark::before {
    border-top-color: #000;
}

.sep {
    flex: none;
    width: 8px;
    height: 19px;
    background: linear-gradient(#c0c0c0, #c0c0c0) 4px 0 / 1px 100% no-repeat;
}

/* Letters inside icons */
.g10, .g12, .g13, .g15, .g17 {
    stroke: none;
}

.g10 { font-size: 10px; }
.g12 { font-size: 12px; }
.g13 { font-size: 13px; }
.g15 { font-size: 15px; }
.g17 { font-size: 17px; font-family: Roboto, sans-serif; font-weight: 300; }
.g-blue { fill: #2490d0; font-weight: 600; }
.g-purple { fill: #a845b0; font-weight: 600; }
.g-dark { fill: #3a3a38; font-weight: 600; }
.g-gray { fill: #a8a8a8; }
.g-bold { font-weight: bold; }

.standard {
    height: 39px;
    padding-bottom: 3px;
}

.workspace {
    display: flex;
    flex: 1;
    min-height: 0;
}

.sidebar {
    display: flex;
    flex-direction: column;
    gap: 2px;
    flex: none;
    width: 48px;
    overflow: hidden;
    padding: 3px 0 0 7px;
}

.content {
    display: flex;
    flex-direction: column;
    flex: 1;
    min-width: 0;
}

/* Data source */
.datasource {
    flex: none;
    padding-left: 2px;
}

.table-tools {
    height: 39px;
    background: linear-gradient(#fff, #efefef);
}

.table-view {
    height: 119px;
    overflow: hidden;
    border-top: 1px solid #9a9a9a;
    border-left: 1px solid #9a9a9a;
    background-color: #fff;
}

table {
    width: 100%;
    table-layout: fixed;
    border-spacing: 0;
}

.c-mark { width: 24px; }
.c-name { width: 55px; }
.c-wkn { width: 63px; }
.c-isin { width: 57px; }
.c-kurs { width: 47px; }
.c-kdat { width: 70px; }
.c-kkauf { width: 71px; }
.c-dkauf { width: 66px; }
.c-eu { width: 61px; }
.c-nk { width: 62px; }
.c-text { width: 46px; }
.c-neu { width: 78px; }
.c-upd { width: 76px; }
.c-waehr { width: 58px; }

th,
td {
    height: 20px;
    padding: 0 0 0 2px;
    overflow: hidden;
    white-space: nowrap;
    font-weight: normal;
    text-align: left;
    border-right: 1px solid #c8c8c8;
    border-bottom: 1px solid #c8c8c8;
}

thead th {
    padding: 0;
    text-align: center;
    background-color: #f0f0f0;
    border-color: #6a6a6a;
}

tr :first-child {
    background-color: #f0f0f0;
    border-color: #000;
}

tr :last-child {
    border-color: transparent;
}

thead tr :last-child {
    border-bottom-color: #6a6a6a;
}

.current::before {
    content: "";
    display: block;
    width: 5px;
    margin-left: 9px;
    border: 4px solid transparent;
    border-left: 5px solid #4aa564;
    border-right: none;
}

.record-nav {
    display: flex;
    align-items: center;
    gap: 2px;
    height: 17px;
    border-left: 1px solid #9a9a9a;
    background: linear-gradient(#000, #000) 0 0 / 244px 1px no-repeat;
}

.record-nav label {
    width: 51px;
}

.record-nav input {
    width: 42px;
    height: 16px;
    padding: 0 0 0 17px;
    border: 1px solid #c8c8c8;
    border-width: 0 1px;
    background: none;
    font: inherit;
}

.record-nav .count {
    width: 67px;
    padding-left: 2px;
}

.record-nav button {
    width: 14px;
    height: 14px;
    border: 1px solid #aaa;
    border-radius: 4px;
    background-color: #fff;
}

.record-nav button:disabled {
    border-color: #d0d0d0;
    background-color: #f6f6f6;
    fill: #909090;
}

.record-nav svg {
    display: block;
    width: 12px;
    height: 12px;
}

.splitter {
    display: flex;
    justify-content: flex-end;
    flex: none;
    height: 10px;
    padding-bottom: 1px;
    border-top: 3px double #9a9a9a;
    background-color: #f6f6f6;
}

.grip {
    width: 42px;
    height: 7px;
    background-color: #666;
}

.grip svg {
    display: block;
}

/* Form */
.document {
    display: grid;
    grid-template-columns: 141px 642px 1fr;
    grid-auto-rows: 55px;
    row-gap: 11px;
    flex: 1;
    min-height: 0;
    overflow: hidden;
    padding: 60px 0 0 60px;
    background-color: #99cccc;
    font-size: 16px;
    line-height: 20px;
}

.document label,
.document span {
    padding-top: 10px;
}

.document span {
    padding-left: 36px;
}

.document input {
    height: 55px;
    padding: 0 2px;
    border: 1px solid #000;
    background-color: #dddddd;
    font: inherit;
}

.document .inset {
    border-color: #808080 #fff #fff #808080;
    box-shadow: inset 1px 1px #000;
}

.medium {
    width: 152px;
}

.small {
    width: 97px;
}

/* Bottom bars */
.form-nav {
    height: 38px;
    background-color: #fcfcfc;
}

.record {
    display: flex;
    align-items: center;
    flex: none;
    width: 214px;
    padding-left: 1px;
}

.record label {
    width: 70px;
}

.record input {
    width: 50px;
    height: 22px;
    padding: 0 4px;
    border: 1px solid #e2e2e2;
    border-bottom-color: #777;
    background-color: #fff;
    font: inherit;
}

.record .of {
    width: 39px;
}

.drawing {
    height: 11px;
    align-items: flex-start;
    background-color: #f9f9f9;
}

.drawing .sep {
    width: 22px;
    background: none;
}

.drawing .narrow {
    width: 9px;
}

.drawing .group-wide {
    margin-left: 86px;
}

.drawing .group {
    margin-left: 51px;
}

/* Red marker arrow */
.pointer {
    position: absolute;
    top: 475px;
    left: 895px;
    width: 60px;
    height: 230px;
}
```
